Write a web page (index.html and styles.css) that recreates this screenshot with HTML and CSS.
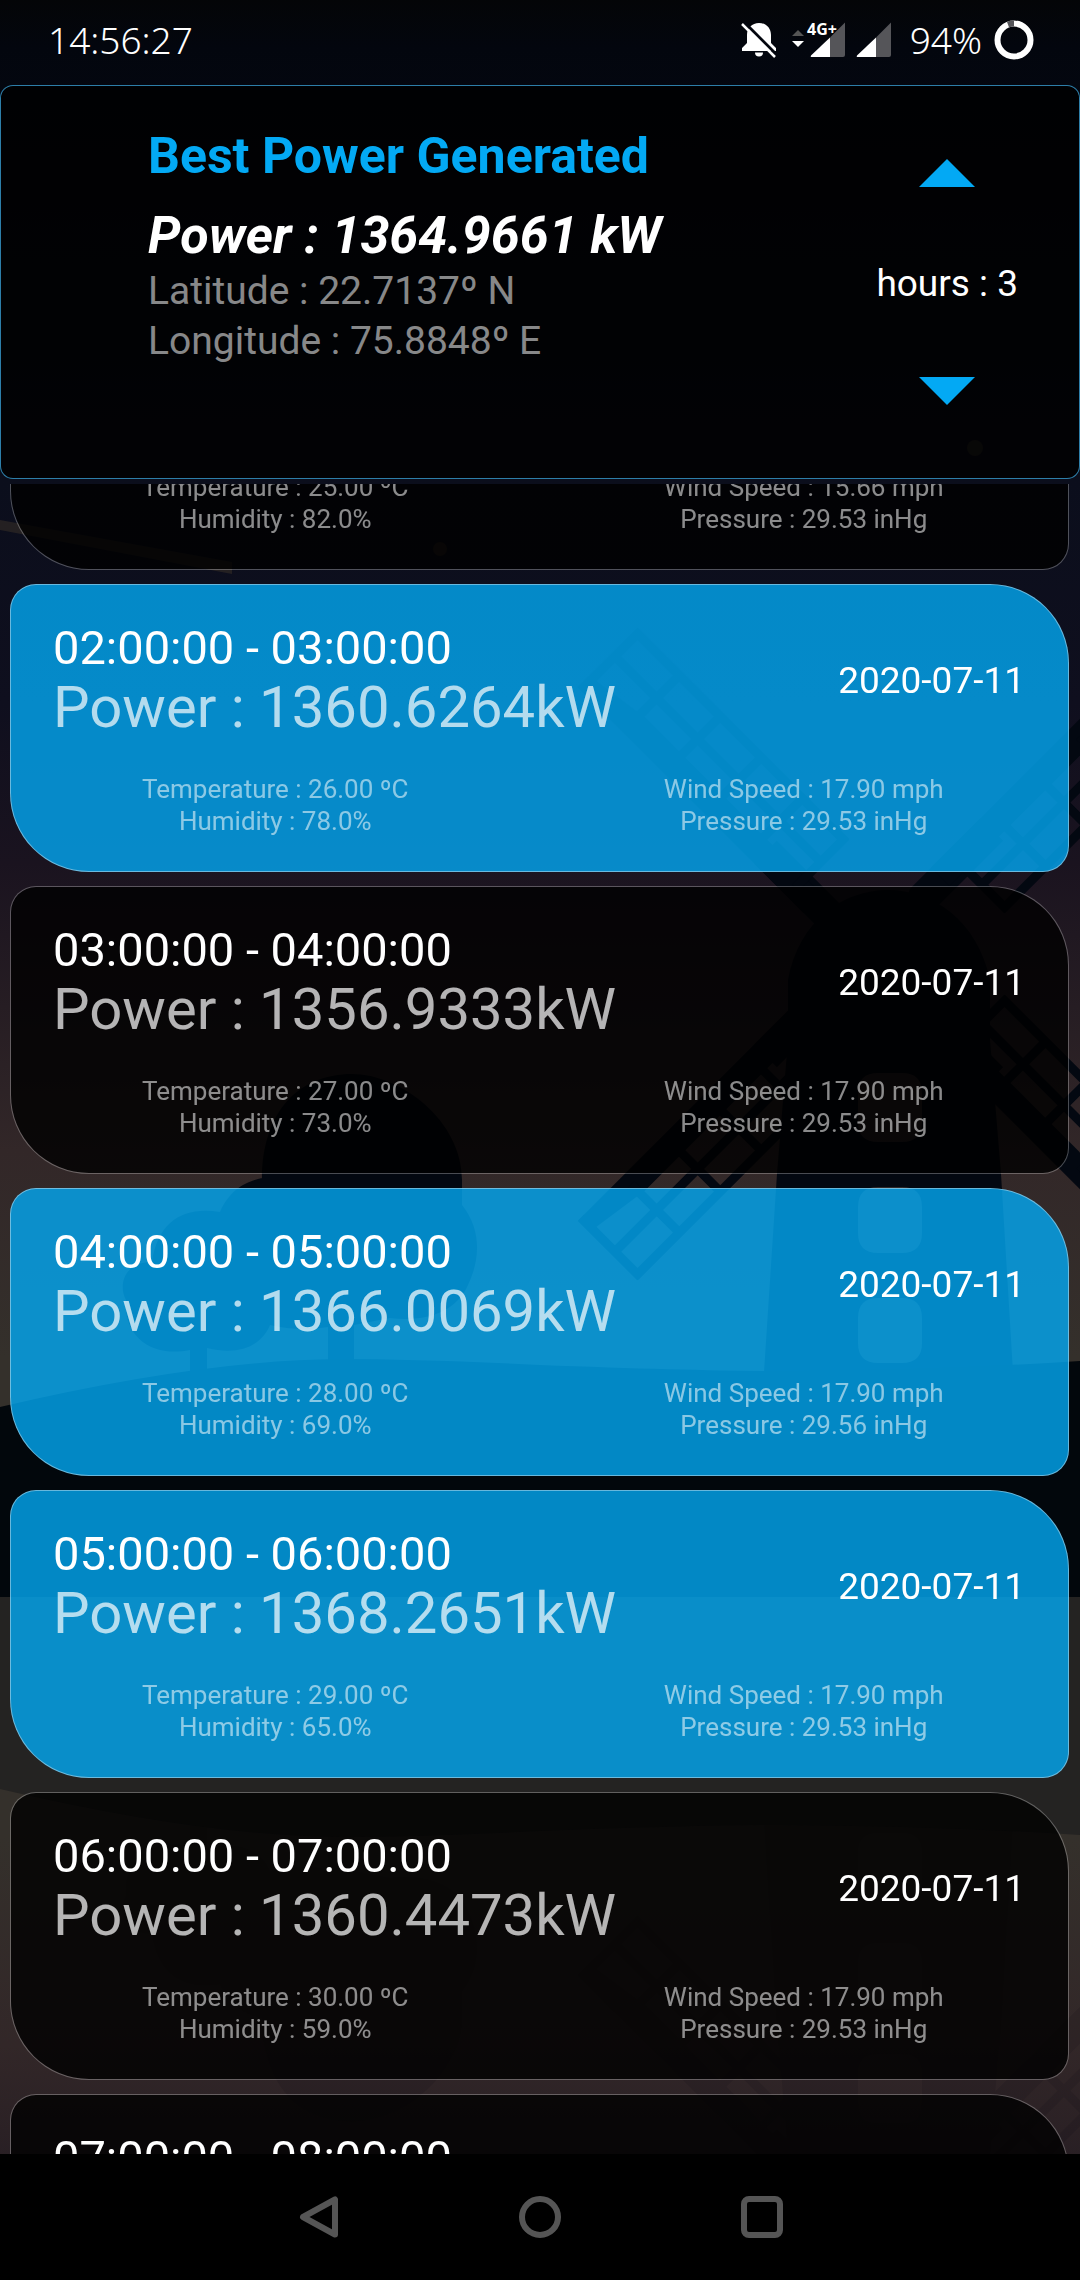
FILE: index.html
```html
<!DOCTYPE html>
<html lang="en">
<head>
<meta charset="utf-8">
<meta name="viewport" content="width=device-width, initial-scale=1">
<title>Best Power Generated</title>
<link rel="stylesheet" href="styles.css">
</head>
<body>
<div class="app">
  <svg class="scene" viewBox="0 0 1080 2280" preserveAspectRatio="none" aria-hidden="true">
    <defs>
      <linearGradient id="sky" x1="0" y1="0" x2="0" y2="1598" gradientUnits="userSpaceOnUse">
        <stop offset="0" stop-color="#040507"/>
        <stop offset="0.03" stop-color="#03060e"/>
        <stop offset="0.3" stop-color="#0b0e1c"/>
        <stop offset="0.44" stop-color="#0f0f1e"/>
        <stop offset="0.54" stop-color="#1a131f"/>
        <stop offset="0.63" stop-color="#261d23"/>
        <stop offset="0.72" stop-color="#322728"/>
        <stop offset="0.85" stop-color="#34302b"/>
        <stop offset="1" stop-color="#34302b"/>
      </linearGradient>
      <g id="blade">
        <path d="M0 0H160V32H60Z"/>
        <path d="M90 6H340L409 16V32H90Z"/>
        <path d="M110 -16H409M110 -48H409M114 -52V20M172 -52V20M230 -52V20M288 -52V20M346 -52V20M405 -52V32" fill="none" stroke="#030811" stroke-width="9"/>
      </g>
      <g id="silhouettes" fill="#030811">
        <path d="M262 1180C262 1110 300 1074 352 1074C400 1074 462 1120 462 1180V1205C482 1230 480 1260 468 1285C455 1315 420 1322 390 1318L354 1325V1362H328V1327C310 1330 290 1330 270 1325C262 1345 240 1356 207 1348V1372H190V1350C150 1358 123 1335 126 1300C118 1285 124 1262 152 1262C158 1220 185 1206 220 1212C230 1190 245 1182 262 1178Z"/>
        <path fill-rule="evenodd" d="M788 1040V980C810 860 965 860 990 980V1040L1001 1174L1013 1372H764L777 1174ZM878 1073Q858 1073 858 1093V1122Q858 1142 878 1142H902Q922 1142 922 1122V1093Q922 1073 902 1073ZM878 1187Q858 1187 858 1207V1233Q858 1253 878 1253H902Q922 1253 922 1233V1207Q922 1187 902 1187ZM878 1298Q858 1298 858 1318V1343Q858 1363 878 1363H902Q922 1363 922 1343V1318Q922 1298 902 1298Z"/>
        <g transform="translate(890 954)">
          <use href="#blade" transform="rotate(45)"/>
          <use href="#blade" transform="rotate(135)"/>
          <use href="#blade" transform="rotate(225) scale(1 -1)"/>
          <use href="#blade" transform="rotate(315) scale(1 -1)"/>
        </g>
      </g>
      <path id="hill" d="M0 1407Q200 1360 340 1359Q420 1359 540 1365Q700 1371 780 1371Q940 1370 1080 1361V1599H0Z"/>
    </defs>
    <rect width="1080" height="1598" fill="url(#sky)"/>
    <path d="M0 520L232 562V574L0 530Z" fill="#2a2524" opacity="0.8"/>
    <circle cx="440" cy="549" r="7" fill="#2a221e"/>
    <circle cx="975" cy="448" r="8" fill="#2c2824"/>
    <use href="#silhouettes"/>
    <use href="#hill" fill="#02070c"/>
    <g transform="translate(0 3196) scale(1 -1)">
      <rect width="1080" height="1598" fill="url(#sky)"/>
      <use href="#silhouettes" opacity="0.1"/>
      <use href="#hill" fill="#242322"/>
    </g>
  </svg>

  <header class="status">
    <time class="clock">14:56:27</time>
    <div class="indicators">
      <svg class="bell" width="36" height="36" viewBox="0 0 36 36" aria-label="Silent">
        <path d="M18 1C25 1 30 6 30 13V21L35 26V29H1V26L6 21V13C6 6 11 1 18 1Z" fill="#fff"/>
        <path d="M14 30.500H22A4 4 0 0 1 14 30.500Z" fill="#fff"/>
        <path d="M3 0L36 33" stroke="#03060e" stroke-width="3"/>
        <path d="M1 2L34 35" stroke="#fff" stroke-width="2.500"/>
      </svg>
      <svg class="mobile" width="56" height="38" viewBox="0 0 56 38" aria-label="4G+ signal">
        <path d="M1 15L7 9L13 15Z" fill="#555"/>
        <path d="M1 20H13L7 26Z" fill="#fff"/>
        <path d="M39 16.500L54 1.500V34Q54 36 52 36H39Z" fill="#555559"/>
        <path d="M39 16.500V36H21Q19 36 20 34.500Z" fill="#fff"/>
        <text x="16" y="14" class="network">4G+</text>
      </svg>
      <svg class="signal" width="36" height="38" viewBox="0 0 36 38" aria-label="Signal">
        <path d="M20 16.500L35 1.500V34Q35 36 33 36H20Z" fill="#555559"/>
        <path d="M20 16.500V36H2Q0 36 1 34.500Z" fill="#fff"/>
      </svg>
      <span class="charge">94%</span>
      <svg width="40" height="40" viewBox="0 0 40 40" aria-label="Battery">
        <circle cx="20" cy="20" r="16.500" fill="none" stroke="#fff" stroke-width="6"/>
        <path d="M20 3.500A16.500 16.500 0 0 0 14 4.600" fill="none" stroke="#555559" stroke-width="6"/>
      </svg>
    </div>
  </header>

  <section class="best">
    <div class="summary">
      <h1 class="title">Best Power Generated</h1>
      <p class="best-power">Power : 1364.9661 kW</p>
      <p class="coord">Latitude : 22.7137º N</p>
      <p class="coord">Longitude : 75.8848º E</p>
    </div>
    <div class="stepper">
      <button type="button" class="step" aria-label="More hours"><svg width="56" height="28" viewBox="0 0 56 28"><path d="M28 0L56 28H0Z"/></svg></button>
      <output class="hours">hours : 3</output>
      <button type="button" class="step" aria-label="Fewer hours"><svg width="56" height="28" viewBox="0 0 56 28"><path d="M0 0H56L28 28Z"/></svg></button>
    </div>
  </section>

  <main class="list">
    <div class="scrolled">
      <article class="card passed">
        <div class="stats"><p>Temperature : 25.00 ºC<br>Humidity : 82.0%</p><p>Wind Speed : 15.66 mph<br>Pressure : 29.53 inHg</p></div>
      </article>
      <article class="card chosen">
        <div class="head"><div><h2 class="range">02:00:00 - 03:00:00</h2><p class="power">Power : 1360.6264kW</p></div><time class="date">2020-07-11</time></div>
        <div class="stats"><p>Temperature : 26.00 ºC<br>Humidity : 78.0%</p><p>Wind Speed : 17.90 mph<br>Pressure : 29.53 inHg</p></div>
      </article>
      <article class="card">
        <div class="head"><div><h2 class="range">03:00:00 - 04:00:00</h2><p class="power">Power : 1356.9333kW</p></div><time class="date">2020-07-11</time></div>
        <div class="stats"><p>Temperature : 27.00 ºC<br>Humidity : 73.0%</p><p>Wind Speed : 17.90 mph<br>Pressure : 29.53 inHg</p></div>
      </article>
      <article class="card chosen">
        <div class="head"><div><h2 class="range">04:00:00 - 05:00:00</h2><p class="power">Power : 1366.0069kW</p></div><time class="date">2020-07-11</time></div>
        <div class="stats"><p>Temperature : 28.00 ºC<br>Humidity : 69.0%</p><p>Wind Speed : 17.90 mph<br>Pressure : 29.56 inHg</p></div>
      </article>
      <article class="card chosen">
        <div class="head"><div><h2 class="range">05:00:00 - 06:00:00</h2><p class="power">Power : 1368.2651kW</p></div><time class="date">2020-07-11</time></div>
        <div class="stats"><p>Temperature : 29.00 ºC<br>Humidity : 65.0%</p><p>Wind Speed : 17.90 mph<br>Pressure : 29.53 inHg</p></div>
      </article>
      <article class="card">
        <div class="head"><div><h2 class="range">06:00:00 - 07:00:00</h2><p class="power">Power : 1360.4473kW</p></div><time class="date">2020-07-11</time></div>
        <div class="stats"><p>Temperature : 30.00 ºC<br>Humidity : 59.0%</p><p>Wind Speed : 17.90 mph<br>Pressure : 29.53 inHg</p></div>
      </article>
      <article class="card">
        <div class="head"><div><h2 class="range">07:00:00 - 08:00:00</h2></div></div>
      </article>
    </div>
  </main>

  <nav class="keys">
    <button type="button" class="key" aria-label="Back"><svg width="42" height="42" viewBox="0 0 42 42"><path d="M38 3.500V38.500L6 21Z"/></svg></button>
    <button type="button" class="key" aria-label="Home"><svg width="42" height="42" viewBox="0 0 42 42"><circle cx="21" cy="21" r="18"/></svg></button>
    <button type="button" class="key" aria-label="Recent apps"><svg width="42" height="42" viewBox="0 0 42 42"><rect x="3" y="3" width="36" height="36" rx="5"/></svg></button>
  </nav>
</div>
</body>
</html>
```
FILE: styles.css
```css
* {
  box-sizing: border-box;
}

body {
  margin: 0;
  background: #000;
  color: #fff;
  font-family: Roboto, "Liberation Sans", sans-serif;
}

h1, h2, p {
  margin: 0;
  font-weight: 400;
}

button {
  padding: 0;
  border: 0;
  background: none;
}

svg {
  display: block;
}

.app {
  position: relative;
  display: flex;
  flex-direction: column;
  height: 100vh;
  overflow: hidden;
  isolation: isolate;
}

.scene {
  position: absolute;
  inset: 0;
  z-index: -1;
  width: 100%;
  height: 100%;
}

/* Status bar */
.status {
  display: flex;
  flex: none;
  align-items: center;
  justify-content: space-between;
  height: 85px;
  padding: 0 46px 6px 48px;
  font-family: "Noto Sans", sans-serif;
  font-size: 37px;
  font-weight: 300;
}

.indicators {
  display: flex;
  align-items: center;
}

.bell {
  margin-right: 14px;
}

.mobile {
  margin-right: 9px;
}

.signal {
  margin-right: 18px;
}

.charge {
  margin-right: 12px;
}

.network {
  fill: #fff;
  font-size: 16px;
  font-weight: 700;
}

/* Best result panel */
.best {
  display: flex;
  flex: none;
  justify-content: space-between;
  height: 394px;
  margin-bottom: 5px;
  padding: 40px 61px 0 147px;
  border: 1px solid rgba(64, 180, 240, 0.7);
  border-radius: 13px;
  background: rgba(0, 0, 0, 0.8);
}

.title {
  margin-bottom: 20px;
  color: #03a9f4;
  font-size: 50px;
  font-weight: 700;
  line-height: 60px;
}

.best-power {
  font-size: 52px;
  font-style: italic;
  font-weight: 700;
  line-height: 60px;
}

.coord {
  color: rgba(255, 255, 255, 0.54);
  font-size: 39px;
  line-height: 50px;
}

.stepper {
  display: flex;
  flex-direction: column;
  align-items: center;
  gap: 70px;
  padding-top: 33px;
}

.step {
  height: 28px;
  fill: #03a9f4;
}

.hours {
  padding-top: 4px;
  font-size: 37px;
  line-height: 46px;
}

/* Forecast list */
.list {
  flex: 1;
  min-height: 0;
  overflow: hidden;
}

.scrolled {
  display: flex;
  flex-direction: column;
  gap: 14px;
  margin-top: -202px;
  padding: 0 11px 0 10px;
}

.card {
  padding: 36px 0 34px;
  border: 1px solid rgba(255, 255, 255, 0.28);
  border-radius: 26px 79px 26px 79px;
  background: rgba(0, 0, 0, 0.8);
  background-clip: padding-box;
}

.chosen {
  border-color: rgba(255, 255, 255, 0.4);
  background: rgba(3, 169, 244, 0.8);
}

.passed {
  padding-top: 188px;
}

.head {
  display: flex;
  align-items: center;
  justify-content: space-between;
  margin-bottom: 34px;
  padding: 0 43px 0 42px;
}

.range {
  font-size: 47px;
  line-height: 54px;
}

.power {
  color: rgba(255, 255, 255, 0.7);
  font-size: 58px;
  line-height: 64px;
}

.date {
  font-size: 37px;
}

.stats {
  display: grid;
  grid-template-columns: 1fr 1fr;
  color: rgba(255, 255, 255, 0.54);
  font-size: 26px;
  line-height: 32px;
  text-align: center;
}

/* System keys */
.keys {
  display: flex;
  flex: none;
  align-items: center;
  justify-content: center;
  gap: 180px;
  height: 126px;
  background: #000;
}

.key {
  fill: none;
  stroke: #555;
  stroke-width: 6px;
  stroke-linejoin: round;
}
```
